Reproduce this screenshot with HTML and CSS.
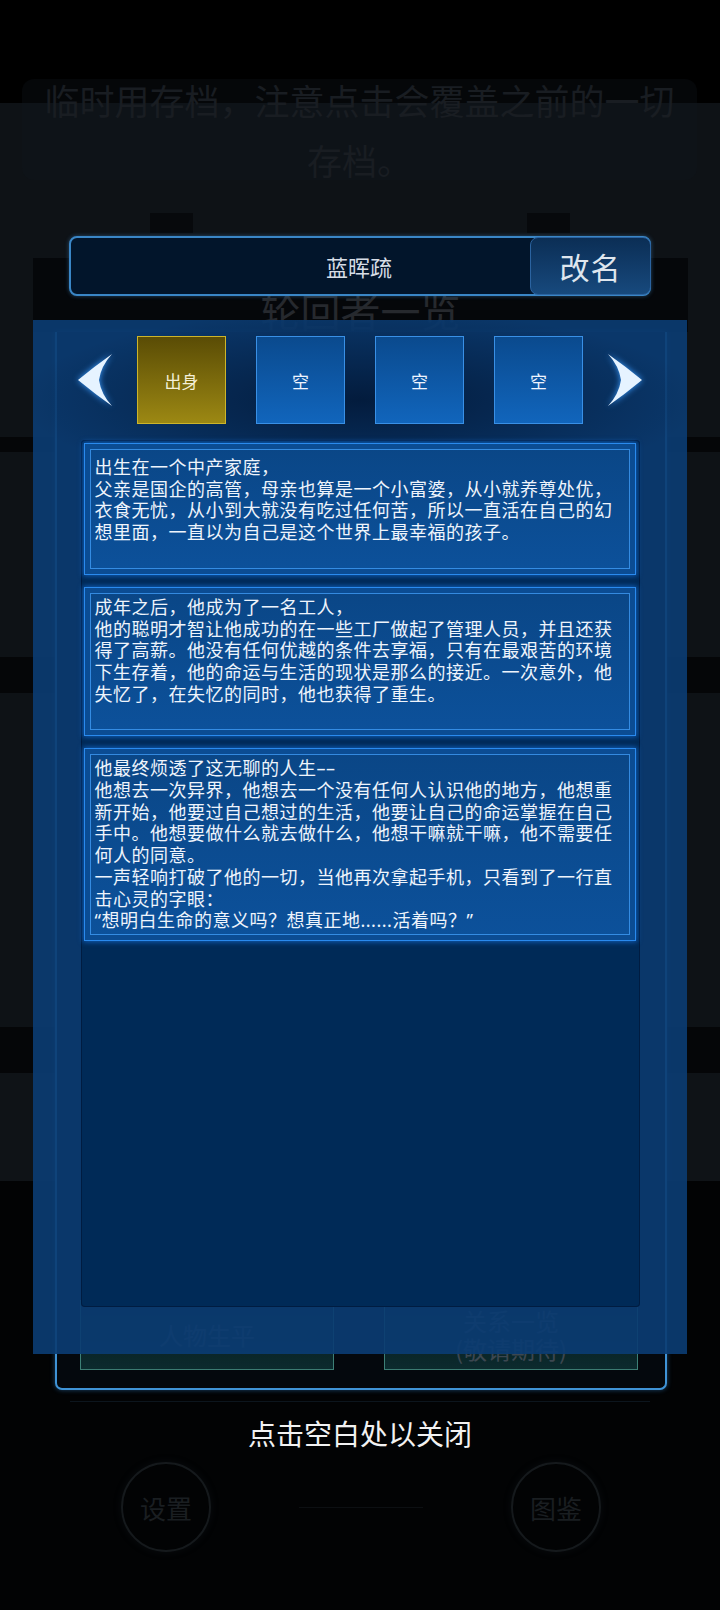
FILE: index.html
```html
<!DOCTYPE html>
<html lang="zh-CN">
<head>
    <meta charset="UTF-8">
    <meta name="viewport" content="width=device-width, initial-scale=1.0">
    <title>轮回者一览</title>
    <link rel="stylesheet" href="styles.css">
</head>
<body>
    <div class="scene">
        <!-- dimmed page behind the dialog -->
        <div class="backdrop">
            <div class="notice">临时用存档，注意点击会覆盖之前的一切<br>存档。</div>
            <div class="frame-marks"><span></span><span></span></div>
            <div class="frame">
                <div class="frame-title">轮回者一览</div>
                <div class="frame-body">
                    <div class="frame-buttons">
                        <div class="frame-btn">人物生平</div>
                        <div class="frame-btn">关系一览<br>(敬请期待)</div>
                    </div>
                </div>
            </div>
            <div class="frame-foot"></div>
            <div class="dock">
                <div class="dock-btn">设置</div>
                <div class="dock-line"></div>
                <div class="dock-btn">图鉴</div>
            </div>
        </div>

        <!-- dialog -->
        <div class="modal">
            <div class="name-bar">
                <span class="name-text">蓝晖疏</span>
                <button class="rename-btn">改名</button>
            </div>

            <div class="panel">
                <div class="nav">
                    <svg class="arrow" width="36" height="54" viewBox="0 0 36 54">
                        <path d="M1 27 Q18 13 35 1 Q24 13 22 27 Q24 41 35 53 Q18 41 1 27 Z"/>
                    </svg>
                    <div class="tabs">
                        <div class="tab tab-active">出身</div>
                        <div class="tab">空</div>
                        <div class="tab">空</div>
                        <div class="tab">空</div>
                    </div>
                    <svg class="arrow" width="36" height="54" viewBox="0 0 36 54">
                        <path d="M1 1 Q18 13 35 27 Q18 41 1 53 Q12 41 14 27 Q12 13 1 1 Z"/>
                    </svg>
                </div>

                <div class="story">
                    <p class="story-card story-card-first story-card-spaced">出生在一个中产家庭，<br>父亲是国企的高管，母亲也算是一个小富婆，从小就养尊处优，<br>衣食无忧，从小到大就没有吃过任何苦，所以一直活在自己的幻<br>想里面，一直以为自己是这个世界上最幸福的孩子。</p>
                    <p class="story-card story-card-spaced">成年之后，他成为了一名工人，<br>他的聪明才智让他成功的在一些工厂做起了管理人员，并且还获<br>得了高薪。他没有任何优越的条件去享福，只有在最艰苦的环境<br>下生存着，他的命运与生活的现状是那么的接近。一次意外，他<br>失忆了，在失忆的同时，他也获得了重生。</p>
                    <p class="story-card">他最终烦透了这无聊的人生––<br>他想去一次异界，他想去一个没有任何人认识他的地方，他想重<br>新开始，他要过自己想过的生活，他要让自己的命运掌握在自己<br>手中。他想要做什么就去做什么，他想干嘛就干嘛，他不需要任<br>何人的同意。<br>一声轻响打破了他的一切，当他再次拿起手机，只看到了一行直<br>击心灵的字眼：<br>“想明白生命的意义吗？想真正地......活着吗？”</p>
                </div>
            </div>

            <div class="close-hint">点击空白处以关闭</div>
        </div>
    </div>
</body>
</html>
```

FILE: styles.css
```css
body {
    margin: 0;
    background: #000;
    font-family: "Noto Sans CJK SC", "Noto Sans", sans-serif;
}

.scene {
    position: relative;
    width: 720px;
    height: 1610px;
    overflow: hidden;
    /* side bands of the list rows behind the dialog */
    background: linear-gradient(to bottom,
        #000 0 103px,
        #0e1216 103px 437px,
        #050608 437px 452px,
        #0e1216 452px 657px,
        #050608 657px 693px,
        #0e1216 693px 1027px,
        #050608 1027px 1073px,
        #0f1317 1073px 1181px,
        #020304 1181px 100%);
}

/* ---------- dimmed page ---------- */

.backdrop {
    display: flex;
    flex-direction: column;
}

.notice {
    margin: 79px 23px 0 22px;
    height: 101px;
    border-radius: 12px;
    background: rgba(16, 22, 30, 0.3);
    display: flex;
    align-items: center;
    justify-content: center;
    text-align: center;
    font-size: 35px;
    line-height: 60px;
    color: #191d22;
}

.frame-marks {
    margin-top: 33px;
    height: 20px;
    padding-left: 150px;
    display: flex;
    gap: 334px;
}

.frame-marks span {
    width: 43px;
    background: #07090c;
}

.frame {
    margin: 25px 32px 0 33px;
    display: flex;
    flex-direction: column;
}

.frame-title {
    height: 74px;
    box-sizing: border-box;
    padding-top: 30px;
    background: #05070a;
    text-align: center;
    font-size: 40px;
    line-height: 44px;
    color: #26292e;
}

.frame-body {
    margin: 0 21px 0 22px;
    height: 1058px;
    box-sizing: border-box;
    border: 2px solid #3f93d6;
    border-top: none;
    border-radius: 0 0 7px 7px;
    background: #04080d;
    box-shadow: 0 0 5px rgba(60, 150, 230, 0.45);
    display: flex;
    flex-direction: column;
    justify-content: flex-end;
    padding: 0 27px 18px 23px;
}

.frame-buttons {
    display: flex;
    justify-content: space-between;
}

.frame-btn {
    width: 254px;
    height: 70px;
    box-sizing: border-box;
    border: 1px solid rgba(74, 150, 138, 0.8);
    background: linear-gradient(to bottom, rgba(10, 36, 38, 0.4), #0c2b2e);
    display: flex;
    align-items: center;
    justify-content: center;
    text-align: center;
    font-size: 24px;
    line-height: 28px;
    color: #3c4751;
}

.frame-foot {
    margin: 11px 70px 0;
    height: 1px;
    background: rgba(36, 62, 90, 0.3);
}

.dock {
    margin-top: 60px;
    padding: 0 119px 0 121px;
    display: flex;
    align-items: center;
    justify-content: space-between;
}

.dock-btn {
    width: 90px;
    height: 90px;
    box-sizing: border-box;
    border: 2px solid #15191c;
    border-radius: 50%;
    box-shadow: 0 0 8px rgba(40, 50, 60, 0.2);
    display: flex;
    align-items: center;
    justify-content: center;
    font-size: 26px;
    color: #1a1e21;
}

.dock-line {
    width: 124px;
    height: 1px;
    background: #0c0f12;
}

/* ---------- dialog ---------- */

.modal {
    position: absolute;
    top: 0;
    left: 0;
    width: 720px;
    height: 1610px;
    display: flex;
    flex-direction: column;
    align-items: center;
}

.name-bar {
    margin-top: 236px;
    width: 582px;
    height: 60px;
    box-sizing: border-box;
    border: 2px solid #3a86c6;
    border-radius: 8px;
    background: #02152b;
    box-shadow: 0 0 4px rgba(70, 150, 220, 0.45);
    display: grid;
    grid-template-columns: 117px 1fr 119px;
    align-items: center;
}

.name-text {
    grid-column: 2;
    text-align: center;
    font-size: 22px;
    color: #d7dde6;
}

.rename-btn {
    grid-column: 3;
    align-self: stretch;
    margin: -1px -2px -1px 0;
    padding: 0;
    border: 1px solid #2b63a0;
    border-radius: 8px;
    background: linear-gradient(to bottom, #0b2e55, #17497d);
    font-family: inherit;
    font-size: 30px;
    letter-spacing: 1px;
    color: #dfe6ee;
}

.panel {
    margin-top: 24px;
    width: 654px;
    height: 1034px;
    box-sizing: border-box;
    padding: 16px 0 47px;
    background:
        radial-gradient(ellipse 340px 90px at 50% 80px, rgba(0, 16, 42, 0.7), rgba(0, 16, 42, 0) 100%),
        rgba(11, 60, 114, 0.92);
    display: flex;
    flex-direction: column;
    align-items: center;
}

.nav {
    display: flex;
    align-items: center;
    justify-content: center;
    gap: 24px;
}

.arrow {
    fill: #e6f3ff;
    filter: drop-shadow(0 0 3px #3c9cff);
}

.tabs {
    display: flex;
    gap: 30px;
}

.tab {
    width: 89px;
    height: 88px;
    box-sizing: border-box;
    border: 1px solid #3990e6;
    background: linear-gradient(to bottom, #0a4a8e, #1165bc);
    display: flex;
    align-items: center;
    justify-content: center;
    font-size: 17px;
    color: #eef4ff;
}

.tab-active {
    border-color: #cdb52a;
    background: linear-gradient(to bottom, #5a4c05, #9c8813);
    color: #f4f0d8;
}

.story {
    margin-top: 16px;
    width: 559px;
    height: 867px;
    box-sizing: border-box;
    padding: 3px 4px 0 3px;
    border-radius: 4px;
    background: #002a57;
    box-shadow: inset 0 0 0 1px rgba(0, 20, 50, 0.6);
    display: flex;
    flex-direction: column;
    gap: 12px;
}

.story-card {
    margin: 0;
    box-sizing: border-box;
    border: 1px solid #2a8aee;
    padding: 9px 10px 8px;
    background: linear-gradient(to bottom, #0a4686, #0c519b);
    box-shadow:
        0 0 5px 1px rgba(25, 120, 235, 0.65),
        inset 0 0 0 5px #0b4c93,
        inset 0 0 0 6px rgba(60, 150, 240, 0.85);
    font-family: "Noto Sans", "Noto Sans CJK SC", sans-serif;
    font-size: 18px;
    letter-spacing: 0.5px;
    line-height: 21.7px;
    color: #eef4fc;
    white-space: nowrap;
}

.story-card-first {
    padding-top: 13px;
}

.story-card-spaced {
    padding-bottom: 30px;
}

.close-hint {
    margin-top: 61px;
    font-size: 28px;
    line-height: 36px;
    color: #f2f2f2;
}
```
